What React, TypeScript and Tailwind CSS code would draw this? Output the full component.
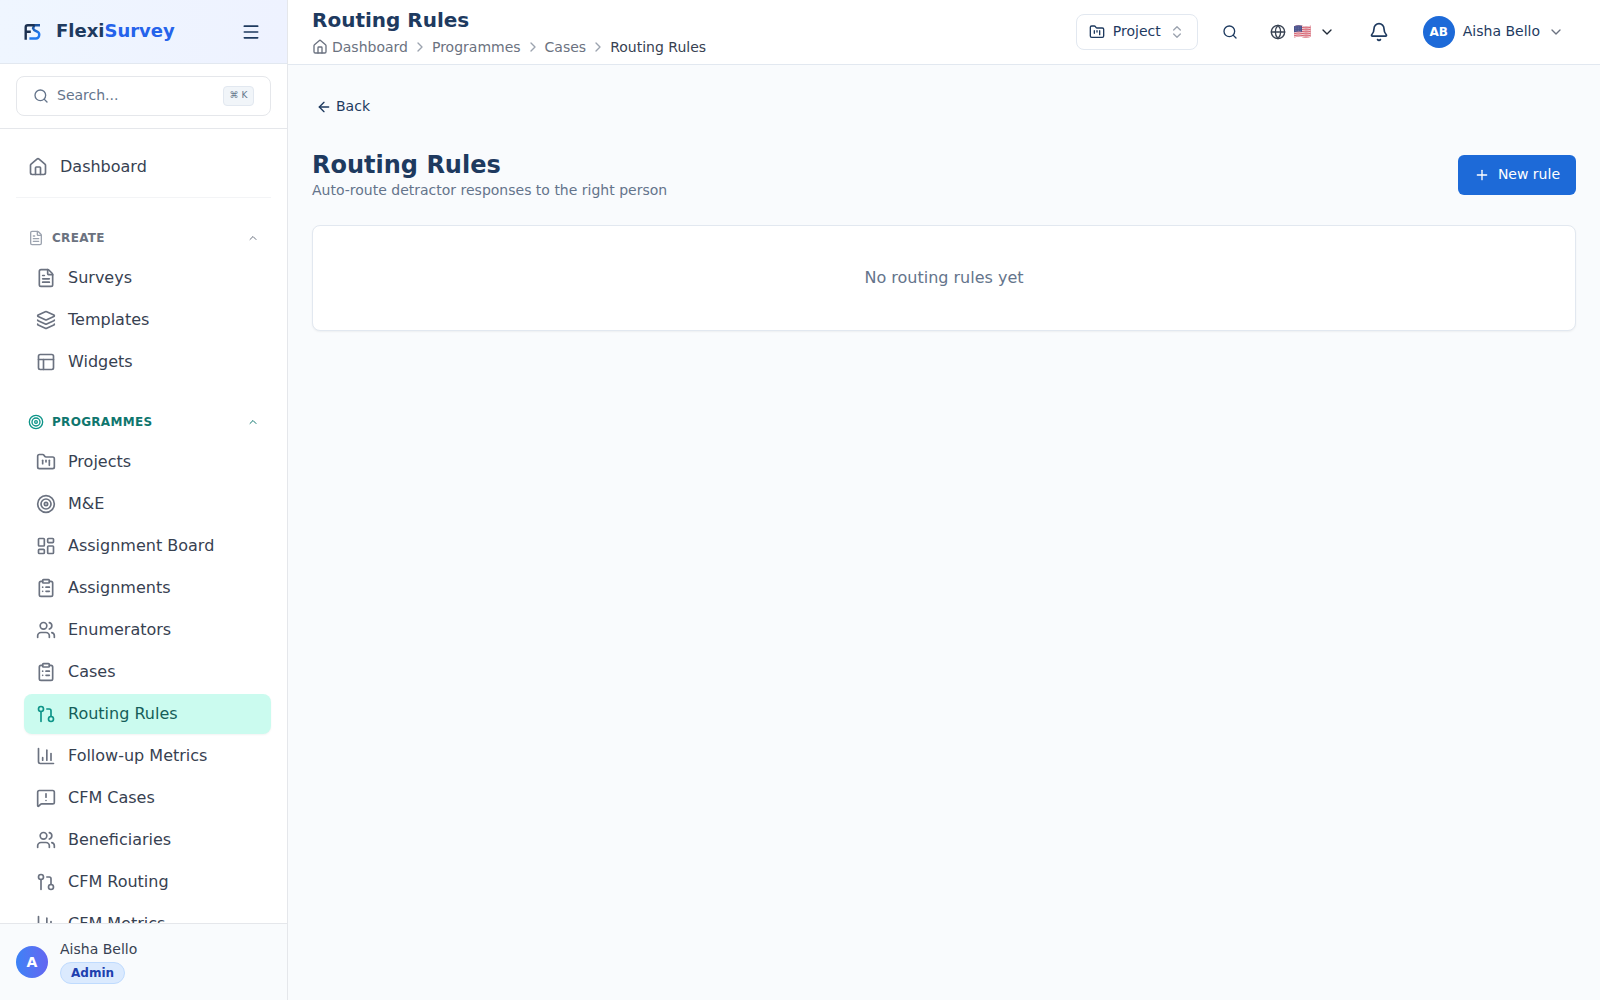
import React from "react";
import {
  ArrowLeft, Bell, ChartColumn, ChevronDown, ChevronRight, ChevronsUpDown, ChevronUp,
  ClipboardList, FileText, FolderKanban, GitPullRequest, Globe, House, Layers,
  LayoutDashboard, Menu, MessageSquareWarning, PanelsTopLeft, Plus, Search, Target, Users,
} from "lucide-react";
import type { LucideIcon } from "lucide-react";

type Item = { label: string; icon: LucideIcon; active?: boolean };

const createItems: Item[] = [
  { label: "Surveys", icon: FileText },
  { label: "Templates", icon: Layers },
  { label: "Widgets", icon: PanelsTopLeft },
];

const programmeItems: Item[] = [
  { label: "Projects", icon: FolderKanban },
  { label: "M&E", icon: Target },
  { label: "Assignment Board", icon: LayoutDashboard },
  { label: "Assignments", icon: ClipboardList },
  { label: "Enumerators", icon: Users },
  { label: "Cases", icon: ClipboardList },
  { label: "Routing Rules", icon: GitPullRequest, active: true },
  { label: "Follow-up Metrics", icon: ChartColumn },
  { label: "CFM Cases", icon: MessageSquareWarning },
  { label: "Beneficiaries", icon: Users },
  { label: "CFM Routing", icon: GitPullRequest },
  { label: "CFM Metrics", icon: ChartColumn },
];

function Logo() {
  return (
    <svg className="size-8" viewBox="0 0 32 32" fill="none" strokeWidth="2.4">
      <defs>
        <linearGradient id="logo-blue" x1="16" y1="8" x2="20" y2="18" gradientUnits="userSpaceOnUse">
          <stop stopColor="#1d4680" />
          <stop offset="1" stopColor="#2179ee" />
        </linearGradient>
      </defs>
      <path d="M24 9.2H18.500L17 12.200L18.200 14.200L21.600 15.800C24.400 17.400 23.400 22.500 20 22.500H13.400" stroke="url(#logo-blue)" strokeLinejoin="round" />
      <path d="M9.700 23.800V11.200C9.700 9.800 10.400 9.200 11.800 9.200H18.600M9.700 15.800H14.800" stroke="#1c3050" />
    </svg>
  );
}

function Flag() {
  return (
    <svg className="h-[13px] w-[17px]" viewBox="0 0 17 13">
      <clipPath id="flag-shape">
        <path d="M0 1.2C3 0 5.500 0 8.500 .8S14 1.500 17 .4V11.800C14 13 11.500 13 8.500 12.200S3 11.600 0 12.600Z" />
      </clipPath>
      <g clipPath="url(#flag-shape)">
        <rect width="17" height="13" fill="#eed3d9" />
        {[0, 2, 4, 6, 8, 10, 12].map((y) => (
          <path key={y} d={`M0 ${y + 0.8}C3 ${y - 0.3} 5.500 ${y - 0.2} 8.500 ${y + 0.5}S14 ${y + 1.1} 17 ${y}`} stroke="#d8626f" strokeWidth="1.1" fill="none" />
        ))}
        <path d="M0 0H8V7C5.500 6.400 3 6.500 0 7.200Z" fill="#4a528c" />
        {[2, 3.8, 5.5].map((y) => (
          <path key={y} d={`M1 ${y}H7.4`} stroke="#8a90ba" strokeWidth=".6" strokeDasharray=".7 .9" />
        ))}
      </g>
    </svg>
  );
}

function NavItem({ label, icon: Icon, active }: Item) {
  return (
    <a
      className={
        active
          ? "flex h-10 shrink-0 items-center gap-3 rounded-lg bg-[#cbfbef] px-3 text-[#155e59] shadow-xs"
          : "flex h-10 shrink-0 items-center gap-3 rounded-lg px-3 text-[#374151]"
      }
    >
      <Icon className={active ? "size-5 text-[#0d9488]" : "size-5 text-[#6b7280]"} />
      <span>{label}</span>
    </a>
  );
}

function Section({ title, icon: Icon, items, teal }: { title: string; icon: LucideIcon; items: Item[]; teal?: boolean }) {
  return (
    <section className="mt-6">
      <div className={teal ? "flex h-8 items-center px-3 text-[#0f766e]" : "flex h-8 items-center px-3 text-[#6b7280]"}>
        <Icon className={teal ? "size-4 text-[#0d9488]" : "size-4 text-[#9ca3af]"} />
        <span className="ml-2 flex-1 text-xs font-bold tracking-[0.3px]">{title}</span>
        <ChevronUp className="size-3" />
      </div>
      <div className="mt-1 ml-2 flex flex-col gap-0.5">
        {items.map((item) => (
          <NavItem key={item.label} {...item} />
        ))}
      </div>
    </section>
  );
}

function Sidebar() {
  return (
    <aside className="flex w-72 shrink-0 flex-col border-r border-[#e5e7eb] bg-white">
      <div className="flex h-16 shrink-0 items-center border-b border-[#e2e8f0] bg-linear-to-r from-[#eff6ff] to-[#eef2ff] pr-[26px] pl-4">
        <Logo />
        <span className="-mt-0.5 ml-2 flex-1 text-lg font-bold text-[#1e3a5f]">
          Flexi<span className="text-[#2563eb]">Survey</span>
        </span>
        <Menu className="size-5 text-[#1e3a5f]" />
      </div>
      <div className="shrink-0 border-b border-[#e5e7eb] px-4 py-3">
        <div className="flex h-10 items-center rounded-lg border border-[#e5e7eb] px-4 text-sm text-[#64748b]">
          <Search className="size-4" />
          <span className="-mt-0.5 ml-2 flex-1">Search...</span>
          <kbd className="flex h-5 w-[31px] items-center justify-center gap-[3px] rounded border border-[#e2e8f0] bg-[#f1f5f9] pb-[3px] font-['DejaVu_Sans',sans-serif] text-[9px] leading-3">
            <span>⌘</span>
            <span>K</span>
          </kbd>
        </div>
      </div>
      <nav className="min-h-0 flex-1 overflow-hidden px-4 pt-4">
        <a className="flex h-11 items-center gap-3 px-3 text-[#374151]">
          <House className="size-5 text-[#6b7280]" />
          <span>Dashboard</span>
        </a>
        <div className="mt-2 border-t border-[#f3f4f6]" />
        <Section title="CREATE" icon={FileText} items={createItems} />
        <Section title="PROGRAMMES" icon={Target} items={programmeItems} teal />
      </nav>
      <div className="flex h-[77px] shrink-0 items-center gap-3 border-t border-[#e5e7eb] bg-[#f9fbfd] px-4">
        <div className="flex size-8 items-center justify-center rounded-full bg-linear-to-r from-[#3b82f6] to-[#6366f1] text-sm font-bold text-white">
          A
        </div>
        <div className="flex flex-col items-start gap-0.5">
          <span className="-mt-px mb-px text-sm text-[#374151]">Aisha Bello</span>
          <span className="flex h-[22px] items-center rounded-full border border-[#bfdbfe] bg-[#dbeafe] px-2.5 text-xs font-bold text-[#1e40af]">
            Admin
          </span>
        </div>
      </div>
    </aside>
  );
}

function Topbar() {
  const crumbs = ["Programmes", "Cases"];
  return (
    <header className="flex h-[65px] shrink-0 items-center justify-between border-b border-[#e2e8f0] bg-white px-6">
      <div className="pb-0.5">
        <h2 className="text-xl leading-7 font-bold text-[#1e3a5f]">Routing Rules</h2>
        <div className="mt-[3px] flex h-5 items-center text-sm text-[#6b7280]">
          <House className="mt-px mr-1 size-4" />
          <span>Dashboard</span>
          {crumbs.map((c) => (
            <React.Fragment key={c}>
              <ChevronRight className="mx-1 mt-px size-4 text-[#9ca3af]" />
              <span>{c}</span>
            </React.Fragment>
          ))}
          <ChevronRight className="mx-1 mt-px size-4 text-[#9ca3af]" />
          <span className="text-[#374151]">Routing Rules</span>
        </div>
      </div>
      <div className="flex items-center text-sm text-[#1e3a5f]">
        <div className="flex h-9 items-center rounded-lg border border-[#e2e8f0] px-3">
          <FolderKanban className="size-4" />
          <span className="-mt-0.5 mr-2 ml-2">Project</span>
          <ChevronsUpDown className="size-4 text-[#9ca3af]" />
        </div>
        <Search className="ml-6 size-4" />
        <Globe className="ml-8 size-4 text-[#374151]" />
        <span className="mb-px ml-2"><Flag /></span>
        <ChevronDown className="ml-2 size-4 text-[#1f2937]" />
        <Bell className="ml-[34px] size-5" />
        <div className="ml-[34px] flex size-8 items-center justify-center rounded-full bg-[#1d6ad8] text-xs font-bold text-white">
          AB
        </div>
        <span className="-mt-0.5 mr-2 ml-2">Aisha Bello</span>
        <ChevronDown className="mr-3 size-4 text-[#6b7280]" />
      </div>
    </header>
  );
}

export default function App() {
  return (
    <div className="flex h-[1000px] w-full overflow-hidden bg-[#f9fbfd] font-['DejaVu_Sans',sans-serif]">
      <Sidebar />
      <div className="flex min-w-0 flex-1 flex-col">
        <Topbar />
        <main className="flex flex-1 flex-col px-6 pt-6">
          <button className="flex h-9 items-center gap-1 self-start px-1 text-sm text-[#1e3a5f]">
            <ArrowLeft className="size-4" />
            <span className="-mt-0.5">Back</span>
          </button>
          <div className="mt-6 flex items-center justify-between">
            <div>
              <h1 className="text-2xl leading-8 font-bold text-[#1e3a5f]">Routing Rules</h1>
              <p className="-mt-px mb-px text-sm text-[#64748b]">Auto-route detractor responses to the right person</p>
            </div>
            <button className="flex h-10 items-center gap-2 rounded-md bg-[#1d6ad8] px-4 text-sm text-white">
              <Plus className="size-4" />
              <span className="-mt-0.5">New rule</span>
            </button>
          </div>
          <div className="mt-6 flex h-[106px] items-center justify-center rounded-lg border border-[#e2e8f0] bg-white text-[#64748b] shadow-xs">
            No routing rules yet
          </div>
        </main>
      </div>
    </div>
  );
}
